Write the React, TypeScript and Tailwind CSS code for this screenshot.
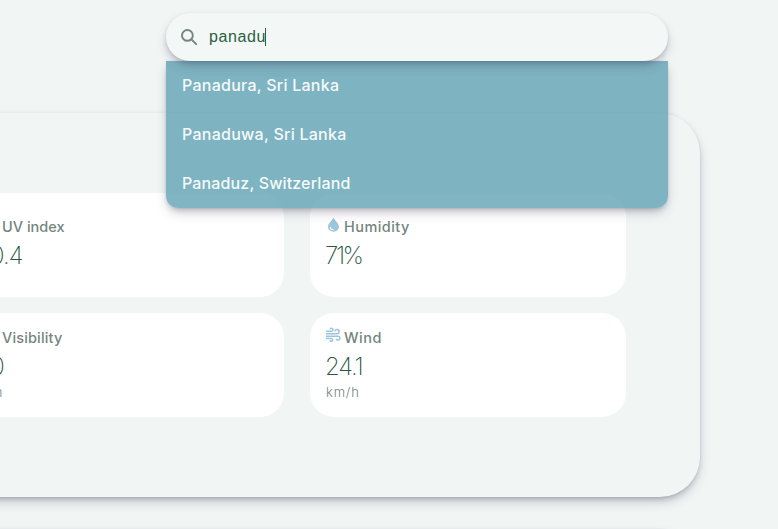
import React from "react";

const softShadow =
  "shadow-[0px_0px_2px_rgba(0,0,0,0.05),0px_6px_12px_-2px_rgba(50,50,93,0.25),0px_3px_7px_-3px_rgba(0,0,0,0.3)]";

function SearchIcon() {
  return (
    <svg
      className="ml-[15px] size-4 shrink-0 fill-none stroke-[#73867d]"
      viewBox="0 0 16 16"
      strokeWidth="1.9"
      strokeLinecap="round"
    >
      <circle cx="6.4" cy="6.4" r="5.4" />
      <path d="m10.4 10.4 4.8 4.8" />
    </svg>
  );
}

function DropIcon() {
  return (
    <svg className="h-[15px] w-[15px] shrink-0" viewBox="0 0 15 15">
      <path d="M7.5.4C6.8 2.8 2 6.4 2 9.8a5.5 5 0 0 0 11 0C13 6.4 8.2 2.8 7.5.4Z" fill="#9bc6de" />
      <path d="M4.3 10a3.1 2.9 0 0 0 3.1 2.8" fill="none" stroke="white" strokeWidth="1.1" strokeLinecap="round" />
    </svg>
  );
}

function WindIcon() {
  return (
    <svg
      className="-mt-px h-[15px] w-[15px] shrink-0 fill-none stroke-[#9bc6de]"
      viewBox="0 0 15 15"
      strokeWidth="1.5"
    >
      <path d="M0 6.8h11a2.1 2.1 0 1 0-2.1-2.4" />
      <path d="M0 4.3h5.4a1.5 1.5 0 1 0-1.4-2" />
      <path d="M0 9.2h12a1.9 1.9 0 1 1-1.8 2.5" />
      <path d="M0 11.6h5.2a1.3 1.3 0 1 1-1.2 1.8" />
    </svg>
  );
}

function SearchBar() {
  return (
    <div className="relative z-10 ml-[166px] w-[502px]">
      <div className={`relative z-10 flex h-12 items-center rounded-[24px] bg-[#f3f7f6] ${softShadow}`}>
        <SearchIcon />
        <span className="ml-[12px] font-['Liberation_Sans',sans-serif] text-base leading-5 tracking-[0.6px] text-[#2b5f43]">
          panadu
        </span>
        <span className="-ml-px h-[18px] w-px bg-[#2b5f43]" />
      </div>
      <ul
        className={`absolute top-12 left-0 w-full rounded-b-[12px] bg-[#62a2b5]/80 text-base leading-[49px] font-medium text-[#f5fafa] ${softShadow}`}
      >
        <li className="h-[49px] pl-4 tracking-[0.25px]">Panadura, Sri Lanka</li>
        <li className="h-[49px] pl-4 tracking-[0.26px]">Panaduwa, Sri Lanka</li>
        <li className="h-[49px] pl-4 tracking-[0.14px]">Panaduz, Switzerland</li>
      </ul>
    </div>
  );
}

type MetricProps = {
  label: string;
  labelTracking: string;
  value: string;
  valueClass: string;
  unit?: string;
  unitClass?: string;
  icon?: React.ReactNode;
  top: string;
};

function Metric({ label, labelTracking, value, valueClass, unit, unitClass = "", icon, top }: MetricProps) {
  return (
    <div className={`h-[104px] w-[316px] rounded-[24px] bg-white px-4 ${top}`}>
      <div className="flex h-5 gap-[3px] text-[14.5px] leading-5 font-medium text-[#73857d]">
        <span className="w-[15px] shrink-0">{icon}</span>
        <span className={labelTracking}>{label}</span>
      </div>
      <div className={`mt-px h-9 text-[24px] leading-9 font-extralight text-[#2b5543] ${valueClass}`}>
        {value}
      </div>
      {unit && (
        <div className={`-mt-[2px] h-[18px] text-[13px] leading-[18px] font-light text-[#73857d] ${unitClass}`}>
          {unit}
        </div>
      )}
    </div>
  );
}

export default function App() {
  return (
    <div className="h-[529px] w-[778px] overflow-hidden bg-[#f1f5f4] pt-[13px] font-['Inter',sans-serif]">
      <SearchBar />
      <main
        className={`mt-[52px] -ml-[120px] h-[384px] w-[820px] rounded-[40px] bg-[#f1f5f4] pt-20 pl-[88px] ${softShadow}`}
      >
        <div className="grid grid-cols-[316px_316px] gap-x-[26px] gap-y-4">
          <Metric label="UV index" labelTracking="tracking-[0px]" value="0.4" valueClass="pl-[6px] tracking-[-0.9px]" top="pt-6" />
          <Metric label="Humidity" labelTracking="tracking-[0.45px]" value="71%" valueClass="-ml-px tracking-[-2.4px]" icon={<DropIcon />} top="pt-6" />
          <Metric label="Visibility" labelTracking="tracking-[0.15px]" value="10" valueClass="-ml-[2px] tracking-[-1px]" unit="km" unitClass="tracking-[0.2px]" top="pt-[15px]" />
          <Metric label="Wind" labelTracking="tracking-[0.5px]" value="24.1" valueClass="-ml-px tracking-[-1.1px]" unit="km/h" unitClass="tracking-[0.8px]" icon={<WindIcon />} top="pt-[15px]" />
        </div>
      </main>
      <section className={`mt-8 -ml-[120px] h-20 w-[820px] rounded-[40px] bg-[#f1f5f4] ${softShadow}`} />
    </div>
  );
}
